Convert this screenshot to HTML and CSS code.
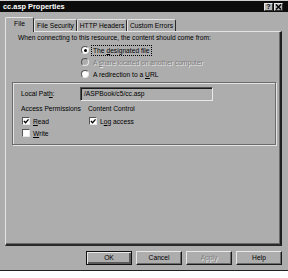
FILE: index.html
```html
<!DOCTYPE html>
<html>
<head>
<meta charset="utf-8">
<link rel="stylesheet" href="styles.css">
</head>
<body>
<div class="dialog">
  <div class="titlebar">
    <span class="title">cc.asp Properties</span>
    <div class="tbtns">
      <span class="tbtn">?</span>
      <span class="tbtn tclose">
        <svg width="7" height="6" viewBox="0 0 7 6"><path d="M1 0.5 L6 5.5 M6 0.5 L1 5.5" stroke="#000" stroke-width="1.4"/></svg>
      </span>
    </div>
  </div>
  <div class="tabs">
    <div class="tab sel t-file">File</div>
    <div class="tab t-sec">File Security</div>
    <div class="tab t-http">HTTP Headers</div>
    <div class="tab t-err">Custom Errors</div>
  </div>
  <div class="panel">
    <div class="intro">When connecting to this resource, the content should come from:</div>
    <div class="radios">
      <div class="radio-row"><span class="radio on"></span><span class="focus">The <u>d</u>esignated file</span></div>
      <div class="radio-row dis"><span class="radio"></span><span class="rtext">A <u>s</u>hare located on another computer</span></div>
      <div class="radio-row"><span class="radio"></span><span class="rtext">A redirection to a <u>U</u>RL</span></div>
    </div>
    <div class="group">
      <div class="path-row">
        <span class="label">Local Pat<u>h</u>:</span>
        <div class="textbox">/ASPBook/c5/cc.asp</div>
      </div>
      <div class="cols">
        <div class="col col1">
          <div class="hdr">Access Permissions</div>
          <div class="check"><span class="cb"><svg width="7" height="7" viewBox="0 0 7 7"><path d="M1 3 L3 5 L6.5 1" fill="none" stroke="#000" stroke-width="1.5"/></svg></span><span><u>R</u>ead</span></div>
          <div class="check"><span class="cb"></span><span><u>W</u>rite</span></div>
        </div>
        <div class="col">
          <div class="hdr">Content Control</div>
          <div class="check"><span class="cb"><svg width="7" height="7" viewBox="0 0 7 7"><path d="M1 3 L3 5 L6.5 1" fill="none" stroke="#000" stroke-width="1.5"/></svg></span><span>L<u>o</u>g access</span></div>
        </div>
      </div>
    </div>
  </div>
  <div class="buttons">
    <div class="btn default">OK</div>
    <div class="btn">Cancel</div>
    <div class="btn disabled">Apply</div>
    <div class="btn">Help</div>
  </div>
</div>
</body>
</html>
```

FILE: styles.css
```css
* { box-sizing: border-box; }
html, body {
  margin: 0;
  padding: 0;
  background: #ffffff;
}
body {
  font-family: "Liberation Sans", Arial, sans-serif;
  font-size: 6.7px;
  color: #000;
}
u { text-decoration: underline; text-underline-offset: 1px; }

.dialog {
  width: 288px;
  height: 271px;
  background: #adadad;
  border-top: 1px solid #cfcfcf;
  border-bottom: 1px solid #202020;
  display: flex;
  flex-direction: column;
}

.titlebar {
  height: 11px;
  background: #0c0c0c;
  display: flex;
  align-items: center;
  justify-content: space-between;
  padding: 0 5px 0 3px;
}
.title {
  color: #fff;
  font-weight: bold;
  font-size: 7.4px;
}
.tbtns { display: flex; gap: 1px; }
.tbtn {
  width: 9px;
  height: 8px;
  background: #b4b4b4;
  border-top: 1px solid #e8e8e8;
  border-left: 1px solid #e8e8e8;
  border-right: 1px solid #303030;
  border-bottom: 1px solid #303030;
  display: flex;
  align-items: center;
  justify-content: center;
  font-weight: bold;
  font-size: 7px;
  line-height: 1;
}

.tabs {
  display: flex;
  align-items: flex-end;
  padding-left: 5px;
  margin-top: 5px;
  height: 14px;
  position: relative;
  z-index: 1;
}
.tab {
  height: 12px;
  line-height: 11px;
  text-align: center;
  border-top: 1px solid #e4e4e4;
  border-left: 1px solid #e4e4e4;
  border-right: 1px solid #2a2a2a;
  border-radius: 2px 2px 0 0;
  white-space: nowrap;
}
.tab.sel {
  height: 15px;
  margin-bottom: -1px;
  background: #adadad;
  line-height: 12px;
}
.t-file { width: 29px; }
.t-sec { width: 43px; }
.t-http { width: 50px; }
.t-err { width: 49px; }

.panel {
  margin: 0 6px 0 5px;
  height: 215px;
  border-top: 1px solid #e4e4e4;
  border-left: 1px solid #e4e4e4;
  border-right: 2px solid #1e1e1e;
  border-bottom: 2px solid #2a2a2a;
  box-shadow: inset -1px -1px 0 #6a6a6a;
  padding: 0 4px 0 6px;
}
.intro {
  line-height: 12px;
  padding-left: 6px;
}
.radios {
  padding-left: 69px;
}
.radio-row {
  display: flex;
  align-items: center;
  height: 12px;
}
.radio {
  width: 8px;
  height: 8px;
  border-radius: 50%;
  background: #fff;
  border: 1px solid;
  border-color: #555 #e8e8e8 #e8e8e8 #555;
  margin-right: 3px;
  display: flex;
  align-items: center;
  justify-content: center;
  flex: none;
}
.radio.on::after {
  content: "";
  width: 3px;
  height: 3px;
  border-radius: 50%;
  background: #000;
}
.focus {
  outline: 1px dotted #000;
  outline-offset: 0;
  padding: 0 1px;
  line-height: 9px;
}
.rtext { padding: 0 1px; }
.dis .rtext {
  color: #7c7c7c;
  text-shadow: 1px 1px 0 #e6e6e6;
}
.dis .radio { background: #adadad; }

.group {
  margin-top: 2px;
  height: 63px;
  border: 1px solid #6a6a6a;
  box-shadow: 1px 1px 0 #e4e4e4, inset 1px 1px 0 #e4e4e4;
  padding: 3px 0 0 8px;
}
.path-row {
  display: flex;
  align-items: center;
  height: 15px;
}
.label { width: 59px; }
.textbox {
  width: 133px;
  height: 14px;
  border-top: 1px solid #505050;
  border-left: 1px solid #505050;
  border-right: 1px solid #e8e8e8;
  border-bottom: 1px solid #e8e8e8;
  box-shadow: inset 1px 1px 0 #1a1a1a;
  padding-left: 3px;
  line-height: 12px;
}
.cols {
  display: flex;
  margin-top: 2px;
}
.col1 { width: 67px; }
.hdr { line-height: 12px; }
.check {
  display: flex;
  align-items: center;
  height: 12px;
  padding-left: 1px;
}
.cb {
  width: 8px;
  height: 8px;
  background: #fff;
  border: 1px solid;
  border-color: #555 #e8e8e8 #e8e8e8 #555;
  margin-right: 3px;
  display: flex;
  align-items: center;
  justify-content: center;
  flex: none;
}

.buttons {
  display: flex;
  justify-content: flex-end;
  gap: 4px;
  padding: 5px 6px 0 0;
}
.btn {
  width: 46px;
  height: 14px;
  text-align: center;
  line-height: 11px;
  border-top: 1px solid #e8e8e8;
  border-left: 1px solid #e8e8e8;
  border-right: 1px solid #1a1a1a;
  border-bottom: 1px solid #1a1a1a;
  box-shadow: inset -1px -1px 0 #6a6a6a;
}
.btn.default {
  border: 1px solid #111;
  box-shadow: inset 1px 1px 0 #e8e8e8, inset -2px -2px 0 #5a5a5a;
}
.btn.disabled {
  color: #7c7c7c;
  text-shadow: 1px 1px 0 #e6e6e6;
}
```
